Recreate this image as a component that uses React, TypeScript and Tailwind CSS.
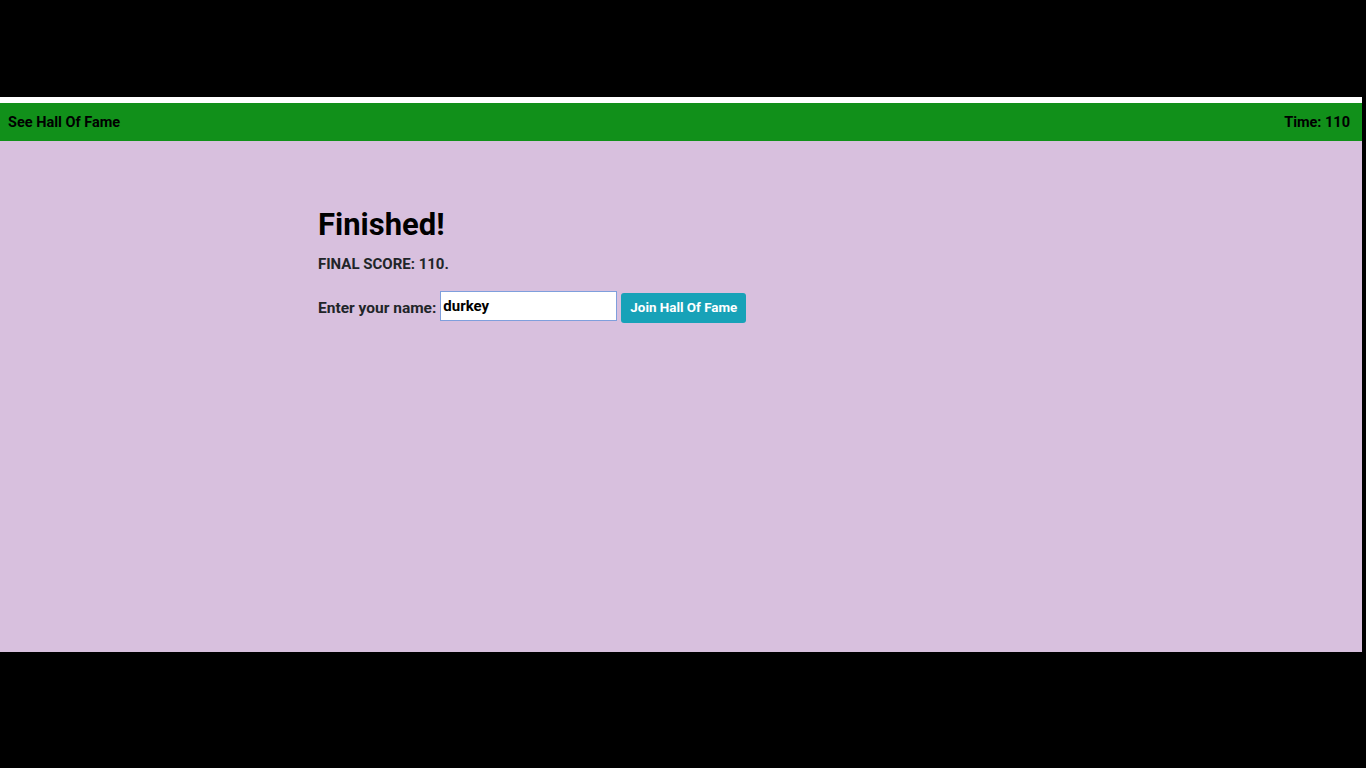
import React, { useState } from 'react';

const font = { fontFamily: 'Roboto, "Liberation Sans", sans-serif' };

export default function App() {
  const [name, setName] = useState('durkey');

  return (
    <div className="w-[1366px] h-[768px] bg-black flex flex-col" style={font}>
      <div className="h-[97px]" />
      <div className="w-[1362px] flex flex-col">
        <div className="h-[6px] bg-white" />
        <div className="h-[38px] bg-[#11901a] flex items-center justify-between px-2 pt-[2px] text-[14.5px] font-bold text-black">
          <span>See Hall Of Fame</span>
          <span className="pr-1">Time: 110</span>
        </div>
        <div className="h-[511px] bg-[#d8c0de] pl-[318px] pt-[66px] text-[#212529]">
          <h1 className="text-[31px] font-bold text-black leading-[36px]">Finished!</h1>
          <p className="mt-[12px] text-[15px] font-bold leading-[18px]">FINAL SCORE: 110.</p>
          <div className="mt-[16px] flex items-center gap-1">
            <span className="pt-[5px] text-[15.5px] font-bold">Enter your name:</span>
            <input
              value={name}
              onChange={(e) => setName(e.target.value)}
              autoFocus
              className="w-[177px] h-[30px] bg-white border border-[#7f9fdc] px-[2px] text-[15px] font-bold text-black outline-none"
            />
            <button className="mt-[4px] h-[30px] px-[9px] rounded-[3px] bg-[#17a2b8] text-white text-[13.4px] font-bold">
              Join Hall Of Fame
            </button>
          </div>
        </div>
      </div>
    </div>
  );
}
